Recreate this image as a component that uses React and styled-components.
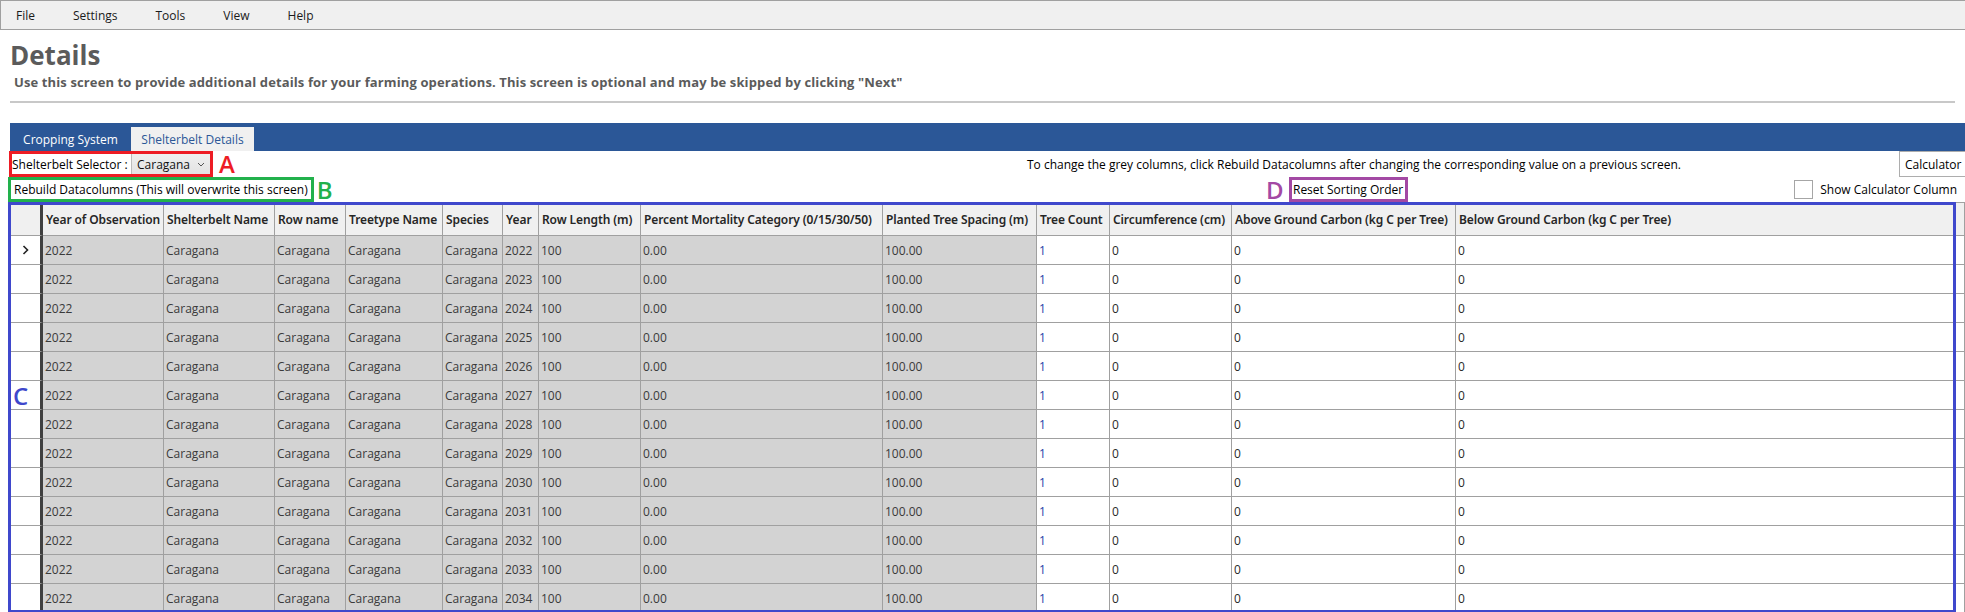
import styled, { createGlobalStyle } from "styled-components";

const GlobalStyle = createGlobalStyle`
  html, body {
    margin: 0;
    padding: 0;
    overflow: hidden;
    background: #ffffff;
  }
  body {
    width: 1965px;
    height: 612px;
    font-family: "Open Sans", "Noto Sans", sans-serif;
    font-size: 12px;
    color: #000;
  }
`;

const MenuBar = styled.div`
  height: 30px;
  box-sizing: border-box;
  border: 1px solid #a0a0a0;
  border-right: none;
  background: #f0f0f0;
  display: flex;
  align-items: center;
  gap: 38px;
  padding-left: 15px;
  font-size: 12px;
`;

const MenuItem = styled.span`
  color: #1a1a1a;
`;

const Title = styled.h1`
  margin: 10px 0 0 10px;
  font-size: 26px;
  line-height: 30px;
  font-weight: 700;
  color: #5b5b5b;
`;

const Subtitle = styled.p`
  margin: 4px 0 0 14px;
  font-size: 13px;
  line-height: 16px;
  font-weight: 700;
  letter-spacing: 0.12px;
  color: #5b5b5b;
`;

const Divider = styled.hr`
  margin: 11px 10px 0 10px;
  height: 2px;
  border: none;
  background: #c8c8c8;
`;

const TabBar = styled.div`
  margin: 20px 0 0 10px;
  height: 28px;
  background: #2b5797;
  display: flex;
  align-items: flex-end;
`;

const Tab = styled.div`
  height: 24px;
  width: ${(p) => p.$width}px;
  display: flex;
  align-items: center;
  justify-content: center;
  font-size: 12px;
  color: ${(p) => (p.$active ? "#2b5797" : "#ffffff")};
  background: ${(p) => (p.$active ? "#f0f0f0" : "transparent")};
`;

const ToolRow = styled.div`
  height: ${(p) => p.$height}px;
  display: flex;
  align-items: center;
  white-space: nowrap;
`;

const Slot = styled.div`
  width: ${(p) => p.$width}px;
  height: 100%;
  flex-shrink: 0;
  display: flex;
  align-items: center;
`;

const Annotated = styled.div`
  box-sizing: border-box;
  height: 100%;
  width: ${(p) => (p.$width ? `${p.$width}px` : "auto")};
  margin-left: ${(p) => p.$left || 0}px;
  border: 3px solid ${(p) => p.$color};
  display: flex;
  align-items: center;
  flex-shrink: 0;
`;

const Letter = styled.span`
  font-size: 24px;
  font-weight: 600;
  line-height: 1;
  color: ${(p) => p.$color};
  margin-left: ${(p) => p.$gap || 0}px;
  margin-right: ${(p) => p.$after || 0}px;
`;

const FieldLabel = styled.span`
  width: 119px;
  flex-shrink: 0;
`;

const Combo = styled.div`
  align-self: stretch;
  flex: 1;
  display: flex;
  align-items: center;
  justify-content: space-between;
  padding: 0 5px 0 5px;
  background: linear-gradient(#efefef, #e3e3e3);
  border-left: 1px solid #bcbcbc;
  font-size: 12px;
  color: #111;
`;

const Chevron = styled.svg`
  width: 8px;
  height: 5px;
`;

const InfoText = styled.span`
  font-size: 12px;
`;

const PlainButton = styled.div`
  box-sizing: border-box;
  height: 100%;
  flex: ${(p) => (p.$fill ? 1 : "none")};
  display: flex;
  align-items: center;
  justify-content: ${(p) => (p.$center ? "center" : "flex-start")};
  width: ${(p) => (p.$width ? `${p.$width}px` : "auto")};
  margin-left: ${(p) => (p.$auto ? "auto" : "0")};
  margin-right: ${(p) => p.$right || 0}px;
  padding: 0 ${(p) => p.$pad || 0}px;
  background: #ffffff;
  border: ${(p) => (p.$bordered ? "1px solid #adadad" : "none")};
  font-size: 12px;
`;

const CheckGroup = styled.label`
  display: flex;
  align-items: center;
  gap: 7px;
  margin-left: auto;
  margin-right: 8px;
  font-size: 12px;
`;

const CheckBox = styled.span`
  width: 19px;
  height: 19px;
  box-sizing: border-box;
  border: 1px solid #a6a6a6;
  background: #fff;
`;

const GridWrap = styled.div`
  position: relative;
  margin-left: 10px;
  border-top: 1px solid #a0a0a0;
`;

const GridRow = styled.div`
  display: grid;
  grid-template-columns: 33px ${(p) => p.$cols};
  height: ${(p) => p.$height}px;
  background: ${(p) => (p.$header ? "#f0f0f0" : "transparent")};
`;

const RowHead = styled.div`
  box-sizing: border-box;
  border-right: 3px solid #404040;
  border-bottom: 1px solid #a0a0a0;
  background: ${(p) => (p.$header ? "#f0f0f0" : "#ffffff")};
  display: flex;
  align-items: center;
  justify-content: center;
`;

const Cell = styled.div`
  box-sizing: border-box;
  border-right: 1px solid #a0a0a0;
  border-bottom: 1px solid #a0a0a0;
  display: flex;
  align-items: center;
  padding-left: 2px;
  overflow: hidden;
  white-space: nowrap;
  font-size: 12px;
  background: ${(p) => (p.$grey ? "#d3d3d3" : "#ffffff")};
  color: ${(p) => (p.$blue ? "#1f42a8" : p.$grey ? "#3a3a3a" : "#2a2a2a")};
`;

const HeadCell = styled(Cell)`
  background: #f0f0f0;
  color: #262626;
  font-family: "Noto Sans", "Open Sans", sans-serif;
  font-weight: 600;
  letter-spacing: -0.1px;
  padding-left: 3px;
`;

const Overlay = styled.div`
  position: absolute;
  left: -2px;
  top: -1px;
  width: 1948px;
  height: 411px;
  box-sizing: border-box;
  border: 3px solid #3f48cc;
  pointer-events: none;
`;

const OverlayLetter = styled.span`
  position: absolute;
  left: 2px;
  top: 174px;
  font-size: 24px;
  font-weight: 600;
  color: #3f48cc;
`;

const columns = [
  { label: "Year of Observation", width: 121, grey: true },
  { label: "Shelterbelt Name", width: 111, grey: true },
  { label: "Row name", width: 71, grey: true },
  { label: "Treetype Name", width: 97, grey: true },
  { label: "Species", width: 60, grey: true },
  { label: "Year", width: 36, grey: true },
  { label: "Row Length (m)", width: 102, grey: true },
  { label: "Percent Mortality Category (0/15/30/50)", width: 242, grey: true },
  { label: "Planted Tree Spacing (m)", width: 154, grey: true },
  { label: "Tree Count", width: 73, blue: true },
  { label: "Circumference (cm)", width: 122 },
  { label: "Above Ground Carbon (kg C per Tree)", width: 224 },
  { label: "Below Ground Carbon (kg C per Tree)", width: 509 },
];

const colTemplate = columns.map((c) => `${c.width}px`).join(" ");

const rows = Array.from({ length: 13 }, (_, i) => [
  "2022",
  "Caragana",
  "Caragana",
  "Caragana",
  "Caragana",
  String(2022 + i),
  "100",
  "0.00",
  "100.00",
  "1",
  "0",
  "0",
  "0",
]);

export default function App() {
  return (
    <>
      <GlobalStyle />
      <MenuBar>
        <MenuItem>File</MenuItem>
        <MenuItem>Settings</MenuItem>
        <MenuItem>Tools</MenuItem>
        <MenuItem>View</MenuItem>
        <MenuItem>Help</MenuItem>
      </MenuBar>

      <Title>Details</Title>
      <Subtitle>
        Use this screen to provide additional details for your farming
        operations. This screen is optional and may be skipped by clicking
        "Next"
      </Subtitle>
      <Divider />

      <TabBar>
        <Tab $width={121}>Cropping System</Tab>
        <Tab $width={123} $active>
          Shelterbelt Details
        </Tab>
      </TabBar>

      <ToolRow $height={26}>
        <Slot $width={1027}>
          <Annotated $color="#ed1c24" $left={9} $width={204}>
            <FieldLabel>Shelterbelt Selector :</FieldLabel>
            <Combo>
              <span>Caragana</span>
              <Chevron viewBox="0 0 8 5">
                <path
                  d="M1 1l3 3 3-3"
                  fill="none"
                  stroke="#555"
                  strokeWidth="1"
                />
              </Chevron>
            </Combo>
          </Annotated>
          <Letter $color="#ed1c24" $gap={6}>
            A
          </Letter>
        </Slot>
        <InfoText>
          To change the grey columns, click Rebuild Datacolumns after changing
          the corresponding value on a previous screen.
        </InfoText>
        <PlainButton $bordered $auto $pad={5} $width={76} $right={-10}>
          Calculator
        </PlainButton>
      </ToolRow>

      <ToolRow $height={25}>
        <Slot $width={1266}>
          <Annotated $color="#22b14c" $left={8}>
            <PlainButton $pad={3}>
              Rebuild Datacolumns (This will overwrite this screen)
            </PlainButton>
          </Annotated>
          <Letter $color="#22b14c" $gap={3}>
            B
          </Letter>
        </Slot>
        <Letter $color="#a349a4" $after={5}>
          D
        </Letter>
        <Annotated $color="#a349a4" $width={119}>
          <PlainButton $fill $center>
            Reset Sorting Order
          </PlainButton>
        </Annotated>
        <CheckGroup>
          <CheckBox />
          Show Calculator Column
        </CheckGroup>
      </ToolRow>

      <GridWrap>
        <GridRow $cols={colTemplate} $height={33} $header>
          <RowHead $header />
          {columns.map((c) => (
            <HeadCell key={c.label}>{c.label}</HeadCell>
          ))}
        </GridRow>
        {rows.map((r, i) => (
          <GridRow key={i} $cols={colTemplate} $height={29}>
            <RowHead>
              {i === 0 && (
                <svg width="7" height="10" viewBox="0 0 7 10">
                  <path
                    d="M1.5 1l4 4-4 4"
                    fill="none"
                    stroke="#222"
                    strokeWidth="1.6"
                  />
                </svg>
              )}
            </RowHead>
            {r.map((v, j) => (
              <Cell
                key={j}
                $grey={columns[j].grey}
                $blue={columns[j].blue}
              >
                {v}
              </Cell>
            ))}
          </GridRow>
        ))}
        <Overlay>
          <OverlayLetter>C</OverlayLetter>
        </Overlay>
      </GridWrap>
    </>
  );
}
